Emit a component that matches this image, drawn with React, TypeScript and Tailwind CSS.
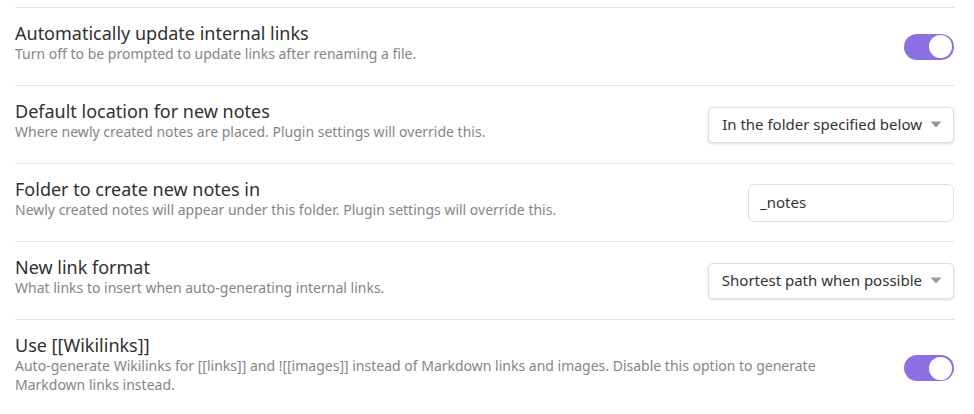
import React from 'react';

type Setting = {
  name: string;
  desc: string;
  control: React.ReactNode;
};

const Toggle: React.FC = () => (
  <div className="w-[50px] h-[26px] rounded-full bg-[#8c6fe2] flex items-center justify-end px-[2px] shrink-0">
    <div className="w-[23px] h-[23px] rounded-full bg-white" />
  </div>
);

const Dropdown: React.FC<{ value: string }> = ({ value }) => (
  <div className="h-[36px] flex items-center gap-[8px] pl-[13px] pr-[11px] bg-white border border-[#dedede] rounded-[5px] shadow-[0_1px_3px_rgba(0,0,0,0.15)] shrink-0 text-[15px] text-[#333]">
    <span>{value}</span>
    <svg width="12" height="7" viewBox="0 0 12 7">
      <path d="M0.5 0.5 L11.5 0.5 L6 6.5 Z" fill="#999" />
    </svg>
  </div>
);

const TextInput: React.FC<{ value: string }> = ({ value }) => (
  <div className="w-[206px] h-[38px] flex items-center px-[11px] bg-white border border-[#dedede] rounded-[6px] shrink-0 text-[15px] text-[#333]">
    {value}
  </div>
);

const settings: Setting[] = [
  {
    name: 'Automatically update internal links',
    desc: 'Turn off to be prompted to update links after renaming a file.',
    control: <Toggle />,
  },
  {
    name: 'Default location for new notes',
    desc: 'Where newly created notes are placed. Plugin settings will override this.',
    control: <Dropdown value="In the folder specified below" />,
  },
  {
    name: 'Folder to create new notes in',
    desc: 'Newly created notes will appear under this folder. Plugin settings will override this.',
    control: <TextInput value="_notes" />,
  },
  {
    name: 'New link format',
    desc: 'What links to insert when auto-generating internal links.',
    control: <Dropdown value="Shortest path when possible" />,
  },
  {
    name: 'Use [[Wikilinks]]',
    desc: 'Auto-generate Wikilinks for [[links]] and ![[images]] instead of Markdown links and images. Disable this option to generate Markdown links instead.',
    control: <Toggle />,
  },
];

const App: React.FC = () => {
  return (
    <div
      className="w-[974px] h-[414px] overflow-hidden bg-white pt-[7px] pl-[15px] pr-[20px]"
      style={{ fontFamily: '"Noto Sans", "Open Sans", sans-serif' }}
    >
      {settings.map((s) => (
        <div key={s.name} className="border-t border-[#e3e3e3] py-[14px] flex items-center">
          <div className="flex-1 pb-[8px] mr-[50px]">
            <div className="text-[18px] leading-[22px] text-[#303030]">{s.name}</div>
            <div className="text-[14px] leading-[19px] text-[#858585]">{s.desc}</div>
          </div>
          {s.control}
        </div>
      ))}
    </div>
  );
};

export default App;
